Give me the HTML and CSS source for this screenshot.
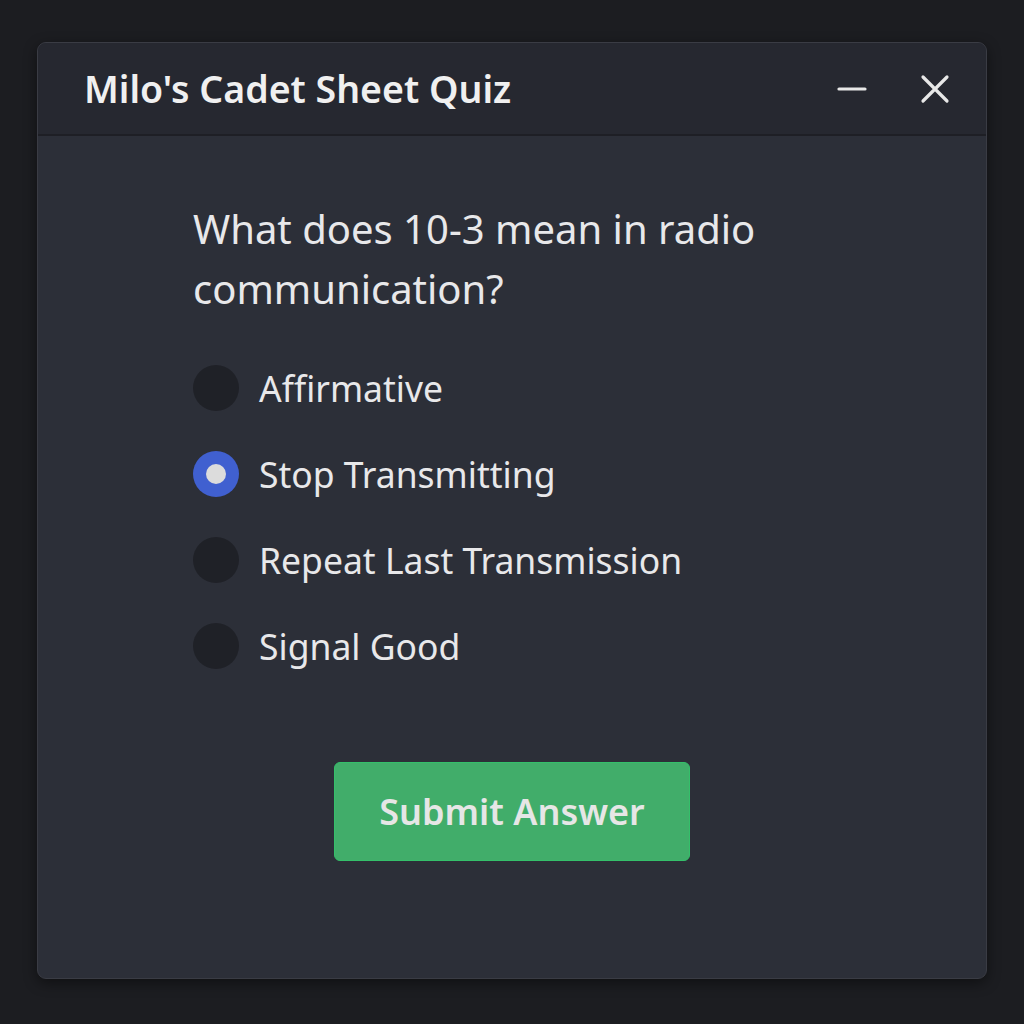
FILE: index.html
```html
<!DOCTYPE html>
<html>
<head>
<meta charset="utf-8">
<link rel="stylesheet" href="styles.css">
</head>
<body>
<div class="window">
  <div class="titlebar">
    <div class="title">Milo's Cadet Sheet Quiz</div>
    <div class="controls">
      <svg class="ctl" width="30" height="30" viewBox="0 0 30 30"><line x1="2" y1="15" x2="28" y2="15" stroke="#e8e8e8" stroke-width="3.2" stroke-linecap="round"/></svg>
      <svg class="ctl" width="30" height="30" viewBox="0 0 30 30"><path d="M3 3 L27 27 M27 3 L3 27" stroke="#e8e8e8" stroke-width="3.2" stroke-linecap="round"/></svg>
    </div>
  </div>
  <div class="content">
    <div class="question">What does 10-3 mean in radio communication?</div>
    <div class="options">
      <div class="option"><span class="radio"></span><span class="label">Affirmative</span></div>
      <div class="option"><span class="radio checked"></span><span class="label">Stop Transmitting</span></div>
      <div class="option"><span class="radio"></span><span class="label">Repeat Last Transmission</span></div>
      <div class="option"><span class="radio"></span><span class="label">Signal Good</span></div>
    </div>
    <div class="actions"><button class="submit">Submit Answer</button></div>
  </div>
</div>
</body>
</html>
```
FILE: styles.css
```css
* { box-sizing: border-box; }
html, body { margin: 0; padding: 0; }
body {
  background: #1c1d21;
  width: 1024px;
  height: 1024px;
  padding: 42px 37px 0 37px;
  font-family: "Noto Sans", "Open Sans", sans-serif;
  color: #e8e8ea;
}
.window {
  width: 950px;
  height: 937px;
  background: #2c2f38;
  border: 1px solid #3a3c44;
  border-radius: 9px;
  box-shadow: 0 4px 14px rgba(0,0,0,0.45);
  overflow: hidden;
  display: flex;
  flex-direction: column;
}
.titlebar {
  height: 93px;
  background: #262830;
  border-bottom: 2px solid #1e1f25;
  display: flex;
  align-items: center;
  justify-content: space-between;
  padding: 0 36px 0 46px;
}
.title {
  font-size: 37.5px;
  font-weight: 600;
  color: #f0f0f0;
}
.controls {
  display: flex;
  align-items: center;
  gap: 53px;
}
.ctl { display: block; }
.content {
  padding: 63px 0 0 155px;
  flex: 1;
}
.question {
  font-size: 40px;
  line-height: 60px;
  width: 640px;
  color: #e8e8ea;
}
.options {
  margin-top: 46px;
  display: flex;
  flex-direction: column;
  gap: 40px;
}
.option {
  display: flex;
  align-items: center;
  gap: 20px;
  height: 46px;
}
.radio {
  width: 46px;
  height: 46px;
  border-radius: 50%;
  background: #1f2127;
  flex: none;
  display: flex;
  align-items: center;
  justify-content: center;
}
.radio.checked {
  background: #4060d0;
}
.radio.checked::after {
  content: "";
  width: 20px;
  height: 20px;
  border-radius: 50%;
  background: #dcdcdc;
}
.label {
  font-size: 35.5px;
  color: #e8e8ea;
}
.actions {
  margin-top: 93px;
  margin-left: 141px;
}
.submit {
  width: 356px;
  height: 99px;
  background: #41ad6a;
  border: 1px solid #34c06a;
  border-radius: 6px;
  color: #e6e6e6;
  font-family: "Noto Sans", "Open Sans", sans-serif;
  font-size: 36px;
  font-weight: 600;
}
```
